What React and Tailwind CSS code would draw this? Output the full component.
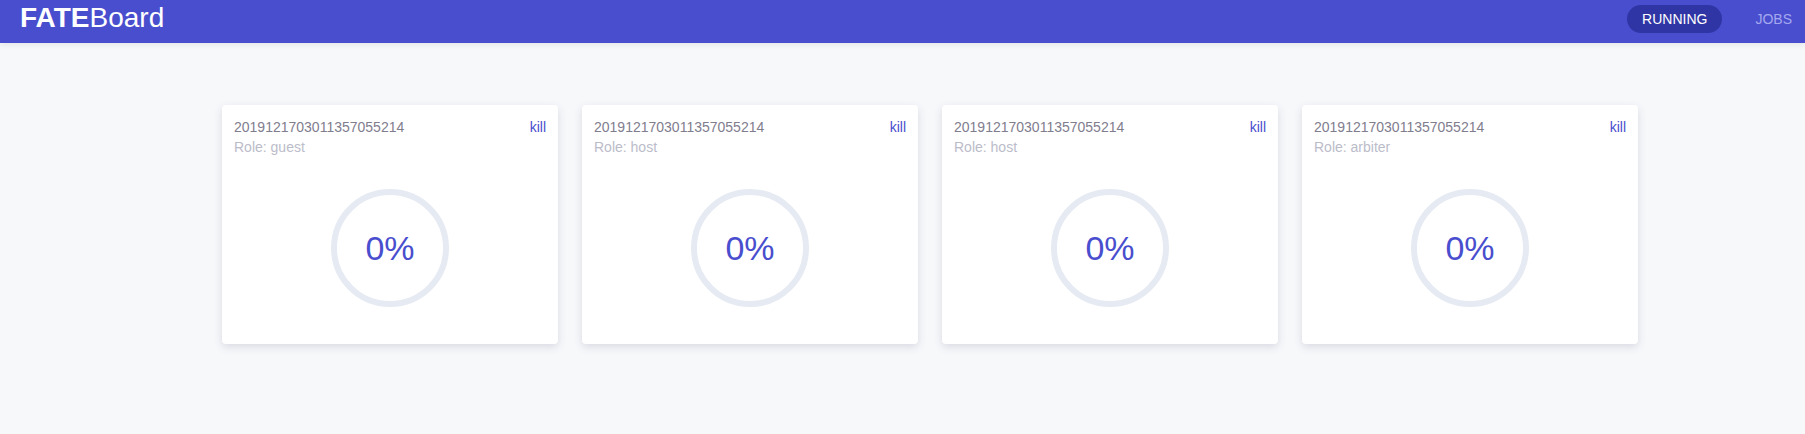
import React from "react";

const jobs = [
  { id: "2019121703011357055214", role: "guest" },
  { id: "2019121703011357055214", role: "host" },
  { id: "2019121703011357055214", role: "host" },
  { id: "2019121703011357055214", role: "arbiter" },
];

function Ring({ percent }) {
  return (
    <div className="relative w-[118px] h-[118px]">
      <svg width="118" height="118" viewBox="0 0 118 118" className="absolute inset-0">
        <circle cx="59" cy="59" r="56" fill="none" stroke="#e6eaf3" strokeWidth="6" />
      </svg>
      <div className="absolute inset-0 flex items-center justify-center text-[34px] leading-none text-[#494ece]">
        {percent}%
      </div>
    </div>
  );
}

function Card({ id, role }) {
  return (
    <div className="w-[336px] h-[239px] bg-white rounded-[4px] shadow-[0_3px_8px_rgba(70,70,110,0.16)] flex flex-col p-3">
      <div className="flex justify-between items-start">
        <div className="text-[14px] leading-[20px] text-[#7f7d8e]">{id}</div>
        <button className="text-[14px] leading-[20px] text-[#494ece] cursor-pointer">kill</button>
      </div>
      <div className="text-[14px] leading-[20px] text-[#bbbcc9]">Role: {role}</div>
      <div className="flex justify-center mt-[32px]">
        <Ring percent={0} />
      </div>
    </div>
  );
}

export default function App() {
  return (
    <div className="w-[1805px] h-[434px] bg-[#f7f8fa] font-['Liberation_Sans',Arial,sans-serif] overflow-hidden">
      <header className="relative z-10 h-[43px] bg-[#494ece] shadow-[0_2px_6px_rgba(0,0,0,0.08)] flex items-start justify-between pl-[20px] pr-[13px]">
        <div className="pt-[4px] text-[28px] leading-[28px] text-white">
          <span className="font-bold">FATE</span>
          <span>Board</span>
        </div>
        <nav className="flex items-center pt-[5px] gap-[33px]">
          <div className="h-[28px] px-[15px] rounded-full bg-[#3035a5] text-white text-[14px] flex items-center">
            RUNNING
          </div>
          <div className="text-[14px] text-[#a5a8ee]">JOBS</div>
        </nav>
      </header>
      <main className="flex justify-center gap-6 pt-[62px] pl-[55px]">
        {jobs.map((j, i) => (
          <Card key={i} id={j.id} role={j.role} />
        ))}
      </main>
    </div>
  );
}
